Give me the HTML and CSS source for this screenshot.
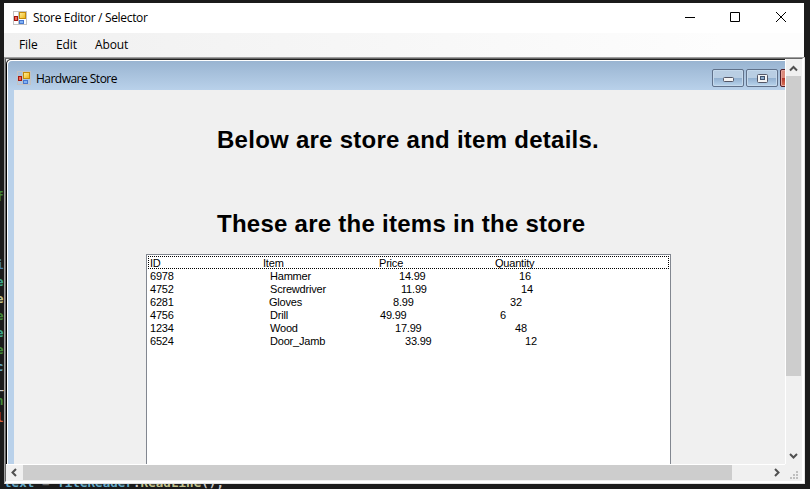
FILE: index.html
```
<!DOCTYPE html>
<html lang="en">
<head>
<meta charset="utf-8">
<title>Store Editor / Selector</title>
<link rel="stylesheet" href="styles.css">
</head>
<body>
<div class="gutter" aria-hidden="true">
<span class="g">f</span><span></span><span></span><span></span><span class="b">i</span><span class="t">e</span><span class="y">e</span><span class="g">e</span><span class="t">e</span><span class="g">e</span><span class="c">c</span><span class="w">_</span><span class="g">n</span><span class="r">l</span>
</div>
<div class="code"><span class="c">text</span> <span class="d">=</span> <span class="c">fileReader</span>.<span class="y">ReadLine</span>();</div>
<svg width="0" height="0" class="defs">
  <defs>
    <linearGradient id="gold" x2="1" y2="1"><stop stop-color="#fff0a0"/><stop offset="1" stop-color="#eeb30d"/></linearGradient>
    <symbol id="app" viewBox="0 0 14 14">
      <path d="M0 .5h14M.5 0v14M0 13.5h14M13.5 0v14M5.500 0v14" stroke="#c3c3c3" fill="none"/>
      <rect x="6.500" y="1.500" width="6" height="6" fill="url(#gold)" stroke="#c58a08"/>
      <rect x="1.500" y="5.500" width="3" height="4" fill="#f06a55" stroke="#a31610"/>
      <rect x="6.500" y="9.500" width="4" height="3" fill="#80b2f6" stroke="#4777ce"/>
    </symbol>
  </defs>
</svg>
<main class="window">
  <header class="titlebar">
    <svg class="icon" width="14" height="14"><use href="#app"/></svg>
    <span class="title">Store Editor / Selector</span>
    <svg class="controls" width="108" height="14" viewBox="0 0 108 14" fill="none" stroke="#000"><path d="M0 6.500h10M45.500 1.500h9v9h-9zM91 1l10 10M101 1L91 11"/></svg>
  </header>
  <nav class="menu"><span class="file">File</span><span class="edit">Edit</span><span class="about">About</span></nav>
  <section class="workspace">
    <div class="child">
      <header class="childbar">
        <svg class="icon" width="14" height="14"><use href="#app"/></svg>
        <span class="childtitle">Hardware Store</span>
        <div class="buttons">
          <span class="btn"><svg width="11" height="5"><rect x=".5" y=".5" width="10" height="4" rx="1" fill="#f4f4f4" stroke="#535666"/></svg></span>
          <span class="btn max"><svg width="11" height="9"><rect x=".5" y=".5" width="10" height="8" rx="1" fill="#f4f4f4" stroke="#535666"/><rect x="3.500" y="2.500" width="4" height="3" fill="#8baac9" stroke="#41516b"/></svg></span>
          <span class="btn close"></span>
        </div>
      </header>
      <div class="form">
        <h1>Below are store and item details.</h1>
        <h2>These are the items in the store</h2>
        <div class="list">
          <div class="row focus"><span>ID</span><span>Item</span><span>Price</span><span>Quantity</span></div>
          <div class="row"><span>6978</span><span>Hammer</span><span>14.99</span><span>16</span></div>
          <div class="row"><span>4752</span><span>Screwdriver</span><span>11.99</span><span>14</span></div>
          <div class="row"><span>6281</span><span>Gloves</span><span>8.99</span><span>32</span></div>
          <div class="row"><span>4756</span><span>Drill</span><span>49.99</span><span>6</span></div>
          <div class="row"><span>1234</span><span>Wood</span><span>17.99</span><span>48</span></div>
          <div class="row"><span>6524</span><span>Door_Jamb</span><span>33.99</span><span>12</span></div>
        </div>
      </div>
    </div>
    <div class="vscroll">
      <svg width="15" height="17" class="arrow"><path d="M4 11.500l3.500-3.500 3.500 3.500"/></svg>
      <div class="vthumb"></div>
      <svg width="15" height="17" class="arrow end"><path d="M4 7l3.500 3.500L11 7"/></svg>
    </div>
    <div class="hscroll">
      <svg width="17" height="15" class="arrow"><path d="M10 4L6.500 7.500 10 11"/></svg>
      <div class="hthumb"></div>
      <svg width="17" height="15" class="arrow end"><path d="M7 4l3.500 3.500L7 11"/></svg>
    </div>
    <svg class="grip" width="15" height="15" fill="#bfbfbf"><path d="M11 5h2v2h-2zM8 8h2v2H8zM11 8h2v2h-2zM5 11h2v2H5zM8 11h2v2H8zM11 11h2v2h-2z"/></svg>
  </section>
</main>
</body>
</html>
```
FILE: styles.css
```
* { box-sizing: border-box; }
body { margin: 0; width: 810px; height: 489px; overflow: hidden; position: relative; background: #1b1b1b; padding: 3px 6px 0 4px; font-family: "Open Sans", "Noto Sans", sans-serif; color: #000; }
.defs { position: absolute; }
.gutter { position: absolute; left: -4px; top: 188px; width: 8px; font: bold 12.500px/17px "DejaVu Sans Mono", monospace; }
.gutter span { display: block; height: 17px; }
.code { position: absolute; left: 4px; top: 474px; font: bold 12.500px/17px "DejaVu Sans Mono", monospace; letter-spacing: .06px; color: #c8c8c8; white-space: pre; }
.g { color: #438a38; } .b { color: #4680b0; } .t { color: #3ba78c; } .y { color: #c2c28c; } .c { color: #62a9c8; } .w { color: #ccc; } .r { color: #d6623f; } .d { color: #666; }
.window { position: relative; width: 800px; height: 480px; background: #f0f0f0; display: flex; flex-direction: column; }
.icon { display: block; flex: none; }
.titlebar { height: 30px; background: #fff; display: flex; align-items: center; padding: 0 0 1px 9px; font-size: 12px; }
.title { margin-left: 6px; width: 114px; white-space: nowrap; letter-spacing: -.33px; }
.controls { margin-left: 538px; flex: none; }
.menu { height: 24px; display: flex; align-items: center; background: linear-gradient(90deg, #f0f0f0, #fdfdfd 90%); font-size: 12px; letter-spacing: -.1px; padding-bottom: 1px; }
.menu span { width: 38px; }
.menu .file { margin-left: 15px; width: 37px; }
.menu .edit { width: 39px; }
.workspace { height: 426px; position: relative; display: grid; grid-template: 405px 17px / 779px 17px; border: 2px solid; border-color: #696969 #fff #fff #646464; }
.workspace::before { content: ""; position: absolute; left: -2px; top: -2px; width: 799px; height: 425px; border: 1px solid; border-color: #a0a0a0 #e3e3e3 #e3e3e3 #a0a0a0; }
.child { overflow: hidden; border-top: 1px solid #202020; border-left: 1px solid #000; display: flex; flex-direction: column; border-top-left-radius: 5px; }
.childbar { height: 30px; flex: none; border-top: 1px solid #fff; border-left: 1px solid #fff; border-top-left-radius: 5px; background: linear-gradient(#99b4d1, #b9d1ea); display: flex; padding: 10px 0 0 9px; font-size: 12px; line-height: 14px; }
.childtitle { margin: 1px 0 0 5px; width: 84px; white-space: nowrap; letter-spacing: -.52px; }
.buttons { display: flex; gap: 2px; margin: -2px 0 0 592px; flex: none; position: relative; left: 0; }
.childtitle, .buttons { flex-shrink: 0; }
.btn { width: 32px; height: 18px; flex: none; border: 1px solid #60718a; border-radius: 2px; box-shadow: inset 0 0 0 1px #c5d9ec; background: linear-gradient(#b9cee3 50%, #91afcf 50%, #b9d4ec); display: flex; align-items: center; justify-content: center; padding-top: 3px; }
.btn.max { padding-top: 0; }
.btn.close { border-color: #531e27; box-shadow: inset 0 0 0 1px #e7a29a; background: linear-gradient(#db8b7c 50%, #b5362b 50%, #d77456); }
.form { flex: 1; min-height: 0; overflow: hidden; background: #f0f0f0; border-left: 6px solid #b9d1ea; box-shadow: -1px 0 #fff; margin-left: 1px; }
h1, h2 { margin: 0 0 0 203px; font: bold 24px/28px "Liberation Sans", sans-serif; white-space: nowrap; }
h1 { padding-top: 36px; letter-spacing: .26px; }
h2 { padding-top: 56px; letter-spacing: .26px; }
.list { width: 525px; height: 240px; margin: 16px 0 0 132px; background: #fff; border: 1px solid #828790; padding: 1px; font: 11px/15px "Liberation Sans", sans-serif; letter-spacing: -.2px; }
.row { height: 13px; display: grid; padding-left: 2px; white-space: nowrap; grid-template-columns: 120px 129px 120px 1fr; }
.row.focus { outline: 1px dotted #000; outline-offset: -1px; grid-template-columns: 113px 116px 116px 1fr; }
.row:nth-child(3) { grid-template-columns: 120px 131px 120px 1fr; }
.row:nth-child(4) { grid-template-columns: 119px 124px 117px 1fr; }
.row:nth-child(5) { grid-template-columns: 120px 110px 120px 1fr; }
.row:nth-child(6) { grid-template-columns: 120px 125px 120px 1fr; }
.row:nth-child(7) { grid-template-columns: 120px 135px 120px 1fr; }
.vscroll { display: flex; flex-direction: column; width: 17px; border-left: 1px solid #fff; }
.vthumb { width: 15px; height: 300px; background: #cdcdcd; }
.arrow { display: block; flex: none; fill: none; stroke: #505050; stroke-width: 2; }
.vscroll .end { margin-top: auto; }
.hscroll { display: flex; border-top: 1px solid #fff; }
.hthumb { width: 709px; height: 15px; background: #cdcdcd; }
.hscroll .end { margin-left: auto; }
.grip { align-self: end; }
```
